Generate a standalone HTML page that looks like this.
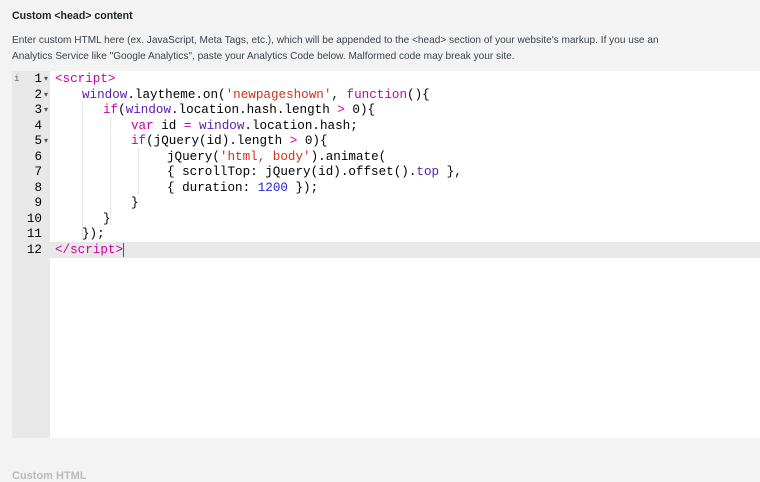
<!DOCTYPE html>
<html><head><style>
body{margin:0;width:760px;height:472px;background:#f3f3f3;font-family:"Liberation Sans",sans-serif;overflow:hidden;position:relative}
h3{position:absolute;left:12px;top:10px;margin:0;font-size:10.6px;font-weight:bold;color:#1d2327}
p{position:absolute;left:12px;top:33px;margin:0;font-size:10.1px;line-height:15.5px;color:#3c434a;width:660px}
.ed{position:absolute;left:12px;top:71px;width:748px;height:367px;background:#fff}
.gut{position:absolute;left:0;top:0;width:38px;height:367px;background:#e8e8e8}
.act{position:absolute;left:0;top:171px;width:748px;height:15.5px;background:#e8e8e8}
.ln{position:absolute;font-family:"Liberation Mono",monospace;font-size:12.6px;line-height:15.5px;white-space:pre;color:#000}
.n{width:30px;text-align:right;left:0}
.g{position:absolute;width:1px;background:#e4e4e4}
.t{color:#c800a4}.s{color:#d12f1b}.k{color:#c800a4}.num{color:#2a23d6}.p{color:#5a1bb4}
</style></head><body>
<h3>Custom &lt;head&gt; content</h3>
<p>Enter custom HTML here (ex. JavaScript, Meta Tags, etc.), which will be appended to the &lt;head&gt; section of your website's markup. If you use an Analytics Service like "Google Analytics", paste your Analytics Code below. Malformed code may break your site.</p>
<div class="ed">
<div class="gut"></div>
<div class="act"></div>
<div class="g" style="left:70px;top:31px;height:139px"></div>
<div class="g" style="left:98px;top:46px;height:108px"></div>
<div class="g" style="left:126px;top:77px;height:47px"></div>
<div class="ln" style="left:2px;top:1px;font-size:9px;color:#666">i</div>
<div style="position:absolute;left:0;top:1px;width:748px">
<div class="ln n" style="top:0">1</div><div class="ln n" style="top:15.5px">2</div><div class="ln n" style="top:31px">3</div><div class="ln n" style="top:46.5px">4</div><div class="ln n" style="top:62px">5</div><div class="ln n" style="top:77.5px">6</div><div class="ln n" style="top:93px">7</div><div class="ln n" style="top:108.5px">8</div><div class="ln n" style="top:124px">9</div><div class="ln n" style="top:139.5px">10</div><div class="ln n" style="top:155px">11</div><div class="ln n" style="top:170.5px">12</div>
<div class="ln" style="left:32px;top:0;font-size:8px;color:#555">▾</div><div class="ln" style="left:32px;top:15.5px;font-size:8px;color:#555">▾</div><div class="ln" style="left:32px;top:31px;font-size:8px;color:#555">▾</div><div class="ln" style="left:32px;top:62px;font-size:8px;color:#555">▾</div>
<div class="ln" style="left:43px;top:0"><span class="t">&lt;script&gt;</span></div>
<div class="ln" style="left:70px;top:15.5px"><span class="p">window</span>.laytheme.on(<span class="s">'newpageshown'</span>, <span class="k">function</span>(){</div>
<div class="ln" style="left:91px;top:31px"><span class="k">if</span>(<span class="p">window</span>.location.hash.length <span class="k">&gt;</span> 0){</div>
<div class="ln" style="left:119px;top:46.5px"><span class="k">var</span> id <span class="k">=</span> <span class="p">window</span>.location.hash;</div>
<div class="ln" style="left:119px;top:62px"><span class="k">if</span>(jQuery(id).length <span class="k">&gt;</span> 0){</div>
<div class="ln" style="left:155px;top:77.5px">jQuery(<span class="s">'html, body'</span>).animate(</div>
<div class="ln" style="left:155px;top:93px">{ scrollTop: jQuery(id).offset().<span class="p">top</span> },</div>
<div class="ln" style="left:155px;top:108.5px">{ duration: <span class="num">1200</span> });</div>
<div class="ln" style="left:119px;top:124px">}</div>
<div class="ln" style="left:91px;top:139.5px">}</div>
<div class="ln" style="left:70px;top:155px">});</div>
<div class="ln" style="left:43px;top:170.5px"><span class="t">&lt;/script&gt;</span><span style="border-left:1px solid #555"></span></div>
</div>
</div>
<div style="position:absolute;left:12px;top:470px;font-size:11px;font-weight:bold;color:#bbb">Custom HTML</div>
</body></html>
